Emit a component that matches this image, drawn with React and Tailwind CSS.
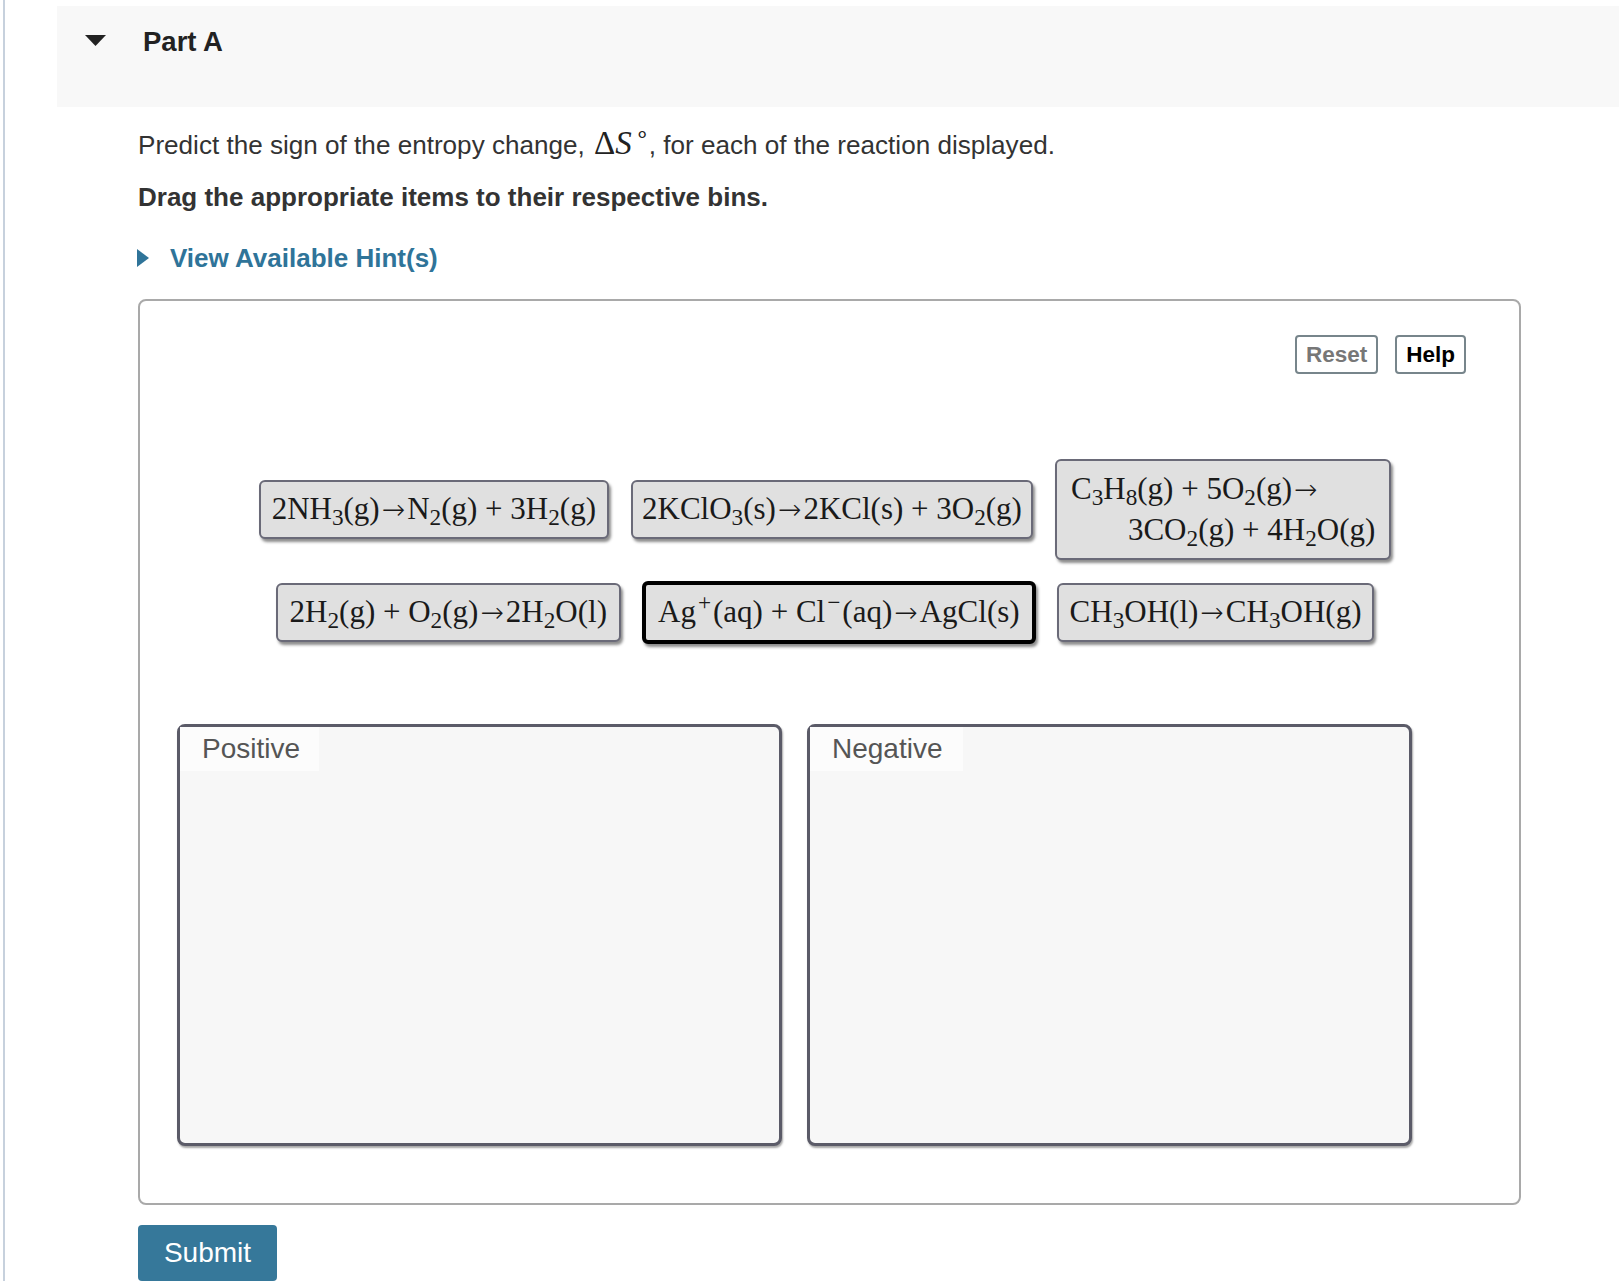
import React from 'react'
import clsx from 'clsx'

// One draggable reaction tile
function Item({ children, selected, className }) {
  return (
    <div
      className={clsx(
        "rounded-[6px] bg-[#e0e0e0] font-['Liberation_Serif','Times_New_Roman',serif] text-[31px] leading-[40px] text-[#1a1a1a] whitespace-nowrap shadow-[2px_3px_3px_rgba(0,0,0,0.45)]",
        selected ? 'border-4 border-black' : 'border-2 border-[#6a6a78]',
        className
      )}
    >
      {children}
    </div>
  )
}

// reaction arrow, a touch wider than the serif one
function Arrow() {
  return <span className="mx-[2px] font-['DejaVu_Sans',sans-serif] text-[28px] font-light">→</span>
}

function Bin({ label, tabWidth }) {
  return (
    <div className="h-[422px] w-[605px] rounded-[8px] border-[3px] border-[#5b5b68] bg-[#f7f7f7] shadow-[1px_2px_2px_rgba(0,0,0,0.35)]">
      <div className={clsx('h-[44px] bg-[#fcfcfc] pl-[22px] text-[28px] leading-[44px] text-[#555]', tabWidth)}>
        {label}
      </div>
    </div>
  )
}

export default function App() {
  return (
    <div className="flex min-h-[1281px] bg-white font-['Liberation_Sans',Arial,sans-serif] text-[#333]">
      <div className="w-[3px]" />
      <div className="w-[2px] bg-[#c7d1dd]" />

      <div className="flex-1">
        {/* Part header */}
        <div className="ml-[52px] mt-[6px] flex h-[101px] items-start bg-[#f8f8f8] pt-[18px]">
          <svg width="21" height="11" viewBox="0 0 21 11" className="ml-[28px] mt-[11px]">
            <polygon points="0,0 21,0 10.5,11" fill="#222" />
          </svg>
          <h2 className="ml-[37px] text-[27.5px] font-bold leading-[36px] text-[#222]">Part A</h2>
        </div>

        <div className="ml-[133px] mr-[98px]">
          <p className="mt-[20px] text-[26.1px] leading-[36px]">
            Predict the sign of the entropy change,{' '}
            <span className="ml-[2px] font-['Liberation_Serif',serif] text-[33px] leading-[30px] text-[#222]">
              Δ<i>S</i>
              <sup className="ml-[3px] text-[0.7em]">∘</sup>
            </span>
            , for each of the reaction displayed.
          </p>
          <p className="mt-[16px] text-[26px] font-bold leading-[36px]">
            Drag the appropriate items to their respective bins.
          </p>

          <div className="mt-[25px] flex h-[36px] items-center">
            <svg width="12" height="18" viewBox="0 0 12 18" className="ml-[-1px]">
              <polygon points="0,0 12,9 0,18" fill="#2f7499" />
            </svg>
            <span className="ml-[21px] text-[26px] font-bold text-[#2f7499]">View Available Hint(s)</span>
          </div>

          {/* Drag and drop area */}
          <div className="mt-[23px] h-[906px] w-[1383px] rounded-[8px] border-2 border-[#a9a9a9] bg-white">
            <div className="flex justify-end gap-[17px] pr-[53px] pt-[34px]">
              <button className="h-[39px] rounded-[4px] border-2 border-[#77858b] px-[9px] text-[22.5px] font-bold text-[#777]">
                Reset
              </button>
              <button className="h-[39px] rounded-[4px] border-2 border-[#77858b] px-[9px] text-[22.5px] font-bold text-black">
                Help
              </button>
            </div>

            <div className="mt-[85px] flex flex-col gap-[21px] pl-[40px] pr-[49px]">
              <div className="flex items-center justify-center gap-[22px]">
                <Item className="px-[11px] py-[7px]">
                  2NH<sub>3</sub>(g)<Arrow />N<sub>2</sub>(g) + 3H<sub>2</sub>(g)
                </Item>
                <Item className="px-[9px] py-[7px]">
                  2KClO<sub>3</sub>(s)<Arrow />2KCl(s) + 3O<sub>2</sub>(g)
                </Item>
                <Item className="py-[8px] pl-[14px] pr-[14px]">
                  <div>
                    C<sub>3</sub>H<sub>8</sub>(g) + 5O<sub>2</sub>(g)<Arrow />
                  </div>
                  <div className="pl-[57px]">
                    3CO<sub>2</sub>(g) + 4H<sub>2</sub>O(g)
                  </div>
                </Item>
              </div>
              <div className="flex items-center justify-center gap-[21px]">
                <Item className="px-[12px] py-[7px]">
                  2H<sub>2</sub>(g) + O<sub>2</sub>(g)<Arrow />2H<sub>2</sub>O(l)
                </Item>
                <Item selected className="px-[12px] py-[7px]">
                  Ag<sup className="mx-[2px]">+</sup>(aq) + Cl<sup className="mx-[2px]">−</sup>(aq)<Arrow />AgCl(s)
                </Item>
                <Item className="px-[11px] py-[7px]">
                  CH<sub>3</sub>OH(l)<Arrow />CH<sub>3</sub>OH(g)
                </Item>
              </div>
            </div>

            <div className="mt-[80px] flex gap-[25px] pl-[37px]">
              <Bin label="Positive" tabWidth="w-[139px]" />
              <Bin label="Negative" tabWidth="w-[153px]" />
            </div>
          </div>

          <button className="mt-[20px] h-[56px] w-[139px] rounded-[4px] bg-[#36789a] text-center text-[28px] text-white">
            Submit
          </button>
        </div>
      </div>
    </div>
  )
}
